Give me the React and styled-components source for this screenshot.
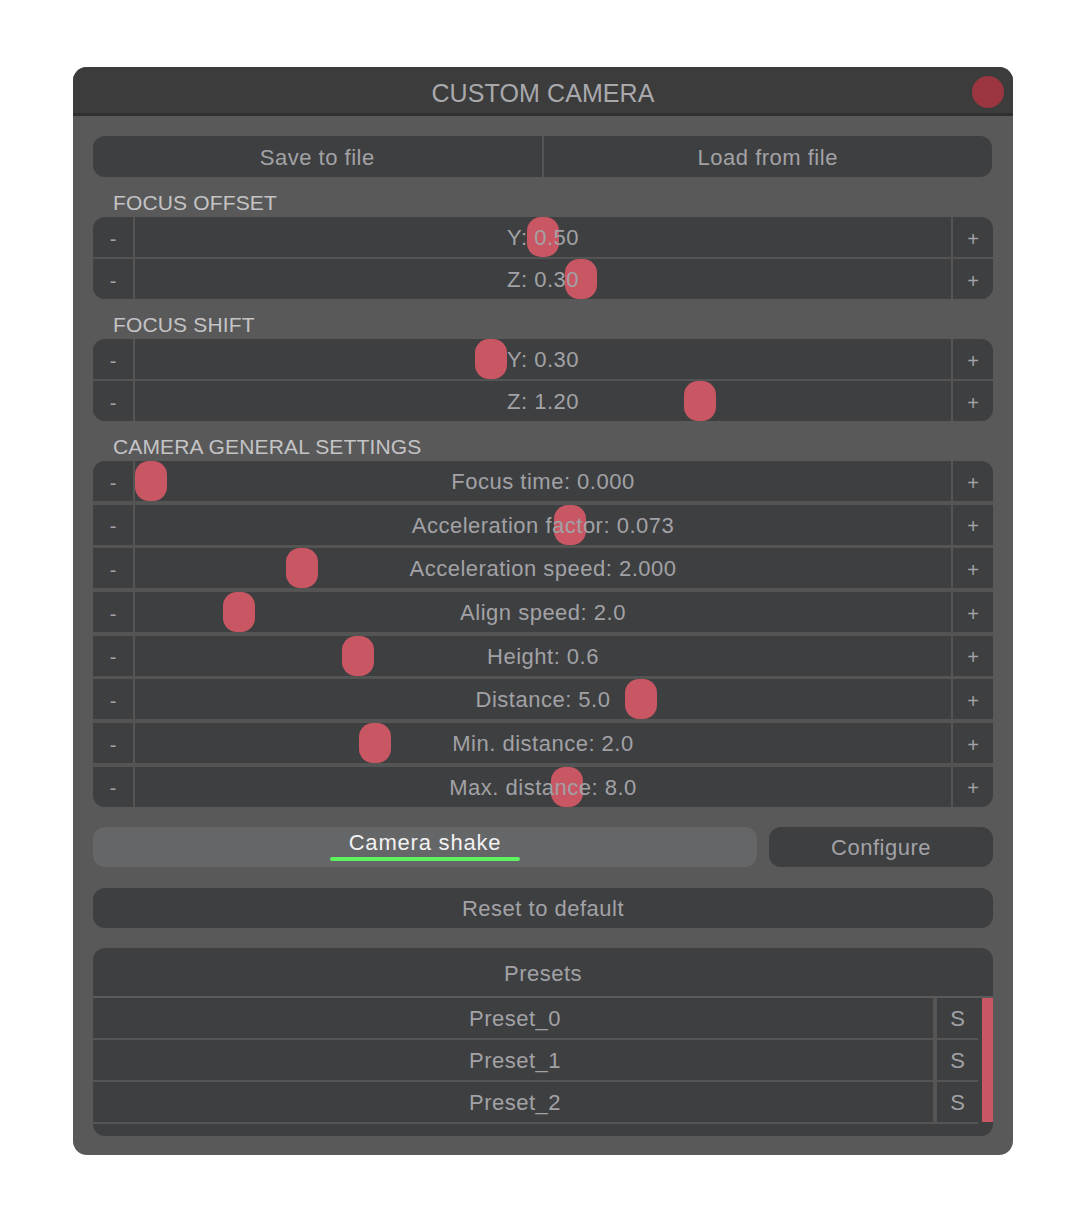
import React from 'react'
import styled, { createGlobalStyle } from 'styled-components'

const GlobalStyle = createGlobalStyle`
  body {
    margin: 0;
    background: #ffffff;
    font-family: "Liberation Sans", Arial, sans-serif;
  }
`

const focusOffset = [
  { label: 'Y: 0.50', pos: 393 },
  { label: 'Z: 0.30', pos: 431 }
]

const focusShift = [
  { label: 'Y: 0.30', pos: 340 },
  { label: 'Z: 1.20', pos: 550 }
]

const general = [
  { label: 'Focus time: 0.000', pos: 0 },
  { label: 'Acceleration factor: 0.073', pos: 420 },
  { label: 'Acceleration speed: 2.000', pos: 151 },
  { label: 'Align speed: 2.0', pos: 88 },
  { label: 'Height: 0.6', pos: 207 },
  { label: 'Distance: 5.0', pos: 491 },
  { label: 'Min. distance: 2.0', pos: 224 },
  { label: 'Max. distance: 8.0', pos: 417 }
]

const presets = ['Preset_0', 'Preset_1', 'Preset_2']

const HANDLE_RANGE = 785

function SliderGroup ({ rows, gap }) {
  return (
    <Group gap={gap}>
      {rows.map(row => (
        <SliderRow key={row.label}>
          <StepButton>-</StepButton>
          <Track>
            <Handle style={{ left: `calc((100% - 32px) * ${row.pos / HANDLE_RANGE})` }} />
            <TrackLabel>{row.label}</TrackLabel>
          </Track>
          <StepButton>+</StepButton>
        </SliderRow>
      ))}
    </Group>
  )
}

export default function App () {
  return (
    <>
      <GlobalStyle />
      <Page>
        <Window>
          <Header>
            <span />
            <Title>CUSTOM CAMERA</Title>
            <CloseButton />
          </Header>
          <Body>
            <FileBar>
              <FileButton>Save to file</FileButton>
              <FileButton>Load from file</FileButton>
            </FileBar>

            <SectionLabel>FOCUS OFFSET</SectionLabel>
            <SliderGroup rows={focusOffset} gap={2} />

            <SectionLabel>FOCUS SHIFT</SectionLabel>
            <SliderGroup rows={focusShift} gap={2} />

            <SectionLabel>CAMERA GENERAL SETTINGS</SectionLabel>
            <SliderGroup rows={general} gap={3.7} />

            <ShakeRow>
              <ToggleButton>
                <ToggleText>Camera shake</ToggleText>
                <ToggleBar />
              </ToggleButton>
              <Button>Configure</Button>
            </ShakeRow>

            <ResetButton>Reset to default</ResetButton>

            <PresetPanel>
              <PresetHeader>Presets</PresetHeader>
              <PresetList>
                <PresetRows>
                  {presets.map(name => (
                    <PresetRow key={name}>
                      <PresetName>{name}</PresetName>
                      <PresetSave>S</PresetSave>
                    </PresetRow>
                  ))}
                </PresetRows>
                <ScrollBar />
              </PresetList>
            </PresetPanel>
          </Body>
        </Window>
      </Page>
    </>
  )
}

const Page = styled.div`
  padding: 67px 0 72px 73px;
`

const Window = styled.div`
  width: 940px;
  background: #595959;
  border-radius: 14px;
  overflow: hidden;
`

const Header = styled.div`
  height: 46px;
  display: grid;
  grid-template-columns: 1fr auto 1fr;
  align-items: center;
  background: #3c3c3c;
  border-bottom: 3px solid #303030;
`

const Title = styled.div`
  font-size: 25px;
  letter-spacing: 0.1px;
  color: #a9a9ad;
  padding-top: 6px;
`

const CloseButton = styled.div`
  justify-self: end;
  width: 32px;
  height: 32px;
  border-radius: 50%;
  background: #9b3540;
  margin: 4px 9px 0 0;
`

const Body = styled.div`
  padding: 20px 20px 19px 20px;
  display: flex;
  flex-direction: column;
`

const FileBar = styled.div`
  height: 41px;
  display: grid;
  grid-template-columns: 1fr 1fr;
  column-gap: 2px;
  background: #555555;
  border-radius: 12px;
  overflow: hidden;
  margin-right: 1px;
`

const FileButton = styled.div`
  background: #3e3f41;
  color: #a2a2a6;
  font-size: 22px;
  letter-spacing: 0.5px;
  display: flex;
  align-items: center;
  justify-content: center;
  padding-top: 2px;
`

const SectionLabel = styled.div`
  height: 40px;
  display: flex;
  align-items: flex-end;
  padding: 0 0 4px 20px;
  box-sizing: border-box;
  font-size: 21px;
  letter-spacing: 0.15px;
  color: #c4c4c6;
  line-height: 21px;
`

const Group = styled.div`
  display: flex;
  flex-direction: column;
  gap: ${p => p.gap}px;
  background: #545454;
  border-radius: 12px;
  overflow: hidden;
`

const SliderRow = styled.div`
  height: 40px;
  display: grid;
  grid-template-columns: 40px 1fr 40px;
  column-gap: 2px;
  background: #555555;
`

const StepButton = styled.div`
  background: #3e3f41;
  color: #a2a2a6;
  font-size: 20px;
  display: flex;
  align-items: center;
  justify-content: center;
  padding-top: 4px;
  box-sizing: border-box;
`

const Track = styled.div`
  position: relative;
  background: #3e3f41;
  display: flex;
  align-items: center;
  justify-content: center;
`

const Handle = styled.div`
  position: absolute;
  top: 0;
  width: 32px;
  height: 40px;
  border-radius: 14px;
  background: #c85763;
`

const TrackLabel = styled.span`
  position: relative;
  font-size: 22px;
  letter-spacing: 0.5px;
  color: #a2a2a6;
  padding-top: 2px;
`

const ShakeRow = styled.div`
  display: grid;
  grid-template-columns: 664px 1fr;
  column-gap: 12px;
  margin-top: 20px;
  height: 40px;
`

const Button = styled.div`
  background: #3e3f41;
  color: #a2a2a6;
  font-size: 22px;
  letter-spacing: 0.5px;
  border-radius: 12px;
  display: flex;
  align-items: center;
  justify-content: center;
  padding-top: 3px;
  box-sizing: border-box;
`

const ToggleButton = styled.div`
  background: #656668;
  border-radius: 12px;
  display: flex;
  flex-direction: column;
  align-items: center;
  justify-content: flex-start;
  padding-top: 4px;
  box-sizing: border-box;
`

const ToggleText = styled.span`
  font-size: 22px;
  letter-spacing: 0.8px;
  color: #f2f2f2;
  line-height: 24px;
`

const ToggleBar = styled.div`
  width: 190px;
  height: 4px;
  border-radius: 2px;
  background: #5ef25e;
  margin-top: 2px;
`

const ResetButton = styled(Button)`
  height: 40px;
  margin-top: 21px;
`

const PresetPanel = styled.div`
  margin-top: 20px;
  background: #3e3f41;
  border-radius: 12px;
  overflow: hidden;
  padding-bottom: 12px;
`

const PresetHeader = styled.div`
  height: 48px;
  display: flex;
  align-items: center;
  justify-content: center;
  font-size: 22px;
  letter-spacing: 0.5px;
  color: #a2a2a6;
  padding-top: 4px;
  box-sizing: border-box;
`

const PresetList = styled.div`
  display: flex;
  border-top: 2px solid #5a5a5a;
`

const PresetRows = styled.div`
  flex: 1;
  display: flex;
  flex-direction: column;
`

const PresetRow = styled.div`
  height: 42px;
  display: grid;
  grid-template-columns: 1fr 41px;
  column-gap: 4px;
  background: #555555;
  border-bottom: 2px solid #555555;
  box-sizing: border-box;
  margin-right: 4px;
`

const PresetName = styled.div`
  background: #3e3f41;
  color: #a2a2a6;
  font-size: 22px;
  letter-spacing: 0.5px;
  display: flex;
  align-items: center;
  justify-content: center;
  padding: 2px 0 0 4px;
`

const PresetSave = styled.div`
  background: #3e3f41;
  color: #a2a2a6;
  font-size: 22px;
  display: flex;
  align-items: center;
  justify-content: center;
  padding-top: 2px;
`

const ScrollBar = styled.div`
  width: 11px;
  background: #c95763;
  margin-bottom: 2px;
`
